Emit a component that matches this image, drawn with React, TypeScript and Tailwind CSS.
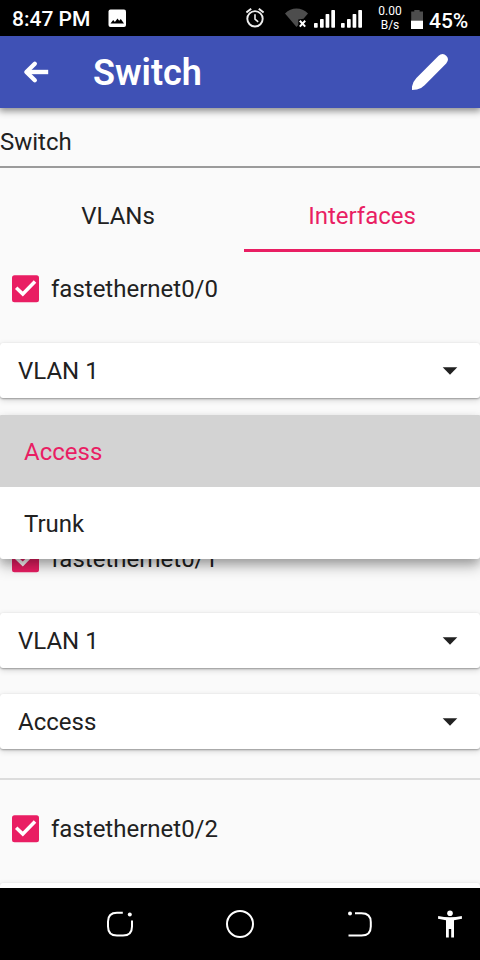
import React from "react";

function StatusBar() {
  return (
    <div className="relative z-20 flex h-9 shrink-0 items-center bg-black text-white">
      <span className="ml-3 mt-0.5 w-[79px] whitespace-nowrap text-[21px] leading-6 font-medium">8:47 PM</span>
      <svg className="ml-[17px] mt-px" width="19" height="19" viewBox="0 0 19 19">
        <rect x="0.5" y="0.5" width="17.5" height="17.5" rx="2" fill="#fff" />
        <path d="M2.5 14.5 5.2 10.9 6.9 12.9 9.5 9.6 11.2 11.8 12.8 10 16 14.5Z" fill="#000" />
      </svg>
      <div className="flex-1" />
      <svg width="234" height="36" viewBox="246 0 234 36" className="absolute left-[246px] top-0">
        <g fill="none" stroke="#eee" strokeWidth="1.9">
          <circle cx="255" cy="18.8" r="7.7" />
          <path d="M255 14.2V19.2L258.2 21.8" strokeWidth="1.6" />
          <path d="M246.4 12.5 251.2 8.8M263.6 12.5 258.8 8.8" strokeWidth="2" />
        </g>
        <path d="M285 13.4C291.5 6.7 301.5 6.7 308 13.4L303.5 18.8 298.3 19.5V25.1L296.5 27Z" fill="#4d4d4d" />
        <path d="M299.8 20.8 305.2 26.6M305.2 20.8 299.8 26.6" stroke="#fff" strokeWidth="2" />
        <g fill="#fff">
          <rect x="314" y="23" width="3.7" height="4.7" rx="0.7" />
          <rect x="320" y="19" width="3.7" height="8.7" rx="0.7" />
          <rect x="325.6" y="14" width="3.7" height="13.7" rx="0.7" />
          <rect x="331.3" y="10" width="3.7" height="17.7" rx="0.7" />
          <rect x="341" y="23" width="3.7" height="4.7" rx="0.7" />
          <rect x="347" y="19" width="3.7" height="8.7" rx="0.7" />
          <rect x="352.6" y="14" width="3.7" height="13.7" rx="0.7" />
          <rect x="358.3" y="10" width="3.7" height="17.7" rx="0.7" />
        </g>
        <path d="M411.2 11.5H414.3V10H419.6V11.5H423V21H411.2Z" fill="#4d4d4d" />
        <rect x="411" y="20.7" width="12" height="8.3" fill="#fff" />
      </svg>
      <div className="mr-[3px] w-[30px] text-center text-[12px] leading-[14px]">
        <div>0.00</div>
        <div>B/s</div>
      </div>
      <span className="ml-[21px] mr-[11px] mt-[5px] w-10 whitespace-nowrap text-[21px] leading-6 font-medium">45%</span>
    </div>
  );
}

function Toolbar() {
  return (
    <div className="relative z-10 flex h-[72px] shrink-0 items-center bg-[#3f51b5] text-white shadow-[0_2px_7px_1px_rgba(0,0,0,0.45)]">
      <svg className="ml-[22px]" width="28" height="24" viewBox="0 0 28 24">
        <path d="M26.2 12H5" fill="none" stroke="#fff" strokeWidth="4.4" />
        <path d="M12.8 3.8 4.4 12 12.8 20.2" fill="none" stroke="#fff" strokeWidth="4.4" strokeLinecap="round" strokeLinejoin="round" />
      </svg>
      <h1 className="ml-[43px] mt-0.5 flex-1 text-[36px] leading-[42px] font-semibold">Switch</h1>
      <svg className="mr-8" width="36" height="36" viewBox="0 0 36 36">
        <path d="M0 36V32.5Q1 27.5 4.4 24L26.6 1.8Q28.4 0 30.6 0 32.6 0 34.2 1.7 36 3.3 36 5.3 36 7.6 34.2 9.4L12.6 31.2Q9.5 34.5 5 35.4Z" fill="#fff" />
      </svg>
    </div>
  );
}

function Select({ value }: { value?: string }) {
  return (
    <div className="flex h-[55px] items-center justify-between rounded-[3px] bg-white pl-[18px] pr-[22px] shadow-[0_1px_2px_rgba(0,0,0,0.32),0_2px_6px_rgba(0,0,0,0.16)]">
      <span>{value}</span>
      <svg width="16" height="9" viewBox="0 0 16 9">
        <path d="M0.7 1.2H15.3L8 8.8Z" fill="#212121" />
      </svg>
    </div>
  );
}

function InterfaceBlock({ name, vlan, mode, first = false }: { name: string; vlan?: string; mode?: string; first?: boolean }) {
  return (
    <section className={first ? "shrink-0 border-b-2 border-[#dcdcdc] pt-[23px] pb-[29px]" : "shrink-0 border-b-2 border-[#dcdcdc] pt-[35px] pb-[29px]"}>
      <div className="mb-[41px] flex h-[27px] items-center pl-3">
        <svg className="overflow-visible" width="27" height="27" viewBox="0 0 27 27">
          <rect y="0.3" width="27" height="27" rx="2.5" fill="#e91e63" />
          <path d="M4.2 12.7 10.8 19 23 6.6" fill="none" stroke="#fff" strokeWidth="3.5" />
        </svg>
        <span className="ml-3">{name}</span>
      </div>
      <Select value={vlan} />
      <div className="h-[26px]" />
      <Select value={mode} />
    </section>
  );
}

function ModeMenu() {
  return (
    <div className="absolute inset-x-0 top-[307px] rounded-[3px] bg-white shadow-[0_8px_14px_rgba(0,0,0,0.26),0_4px_8px_rgba(0,0,0,0.16)]">
      <div className="flex h-[72px] items-center rounded-t-[1px] bg-[#d3d3d3] pl-6 pt-0.5 text-[#e91e63]">Access</div>
      <div className="flex h-[72px] items-center pl-6 pt-0.5">Trunk</div>
    </div>
  );
}

function NavigationBar() {
  return (
    <div className="relative z-20 flex h-[72px] shrink-0 bg-black">
      <svg width="480" height="72" viewBox="0 888 480 72">
        <g fill="none" stroke="#fff" strokeWidth="2">
          <path d="M122.8 912.7H117Q108 912.7 108 921.5V926.5Q108 935.5 117 935.5H123Q132 935.5 132 926.5V920.5" />
          <circle cx="240" cy="924" r="13" />
          <path d="M355 913.2H361.5Q370.8 913.2 370.8 922V926.5Q370.8 935.6 361.5 935.6H348.5" />
        </g>
        <g fill="#fff">
          <circle cx="129.8" cy="914.6" r="2" />
          <circle cx="350" cy="913.5" r="2" />
          <circle cx="450" cy="913.3" r="2.8" />
          <path d="M438.2 916Q450 918.5 461.8 916L462 918.8 454 920.2V937.5H451.2V929H448.8V937.5H446V920.2L438 918.8Z" />
        </g>
      </svg>
    </div>
  );
}

export default function App() {
  return (
    <div className="relative flex h-[960px] w-[480px] flex-col overflow-hidden bg-[#fafafa] font-['Roboto',sans-serif] text-[24px] leading-7 text-[#212121]">
      <StatusBar />
      <Toolbar />
      <main className="relative flex min-h-0 flex-1 flex-col overflow-hidden">
        <div className="flex h-[60px] shrink-0 items-center border-b-2 border-[#9b9b9b] pt-2.5">Switch</div>
        <div className="flex h-[84px] shrink-0 text-center">
          <div className="w-[236px] pt-[34px]">VLANs</div>
          <div className="ml-2 flex-1 border-b-3 border-[#e91e63] pt-[34px] text-[#e91e63]">Interfaces</div>
        </div>
        <InterfaceBlock name="fastethernet0/0" vlan="VLAN 1" first />
        <InterfaceBlock name="fastethernet0/1" vlan="VLAN 1" mode="Access" />
        <InterfaceBlock name="fastethernet0/2" />
        <ModeMenu />
      </main>
      <NavigationBar />
    </div>
  );
}
